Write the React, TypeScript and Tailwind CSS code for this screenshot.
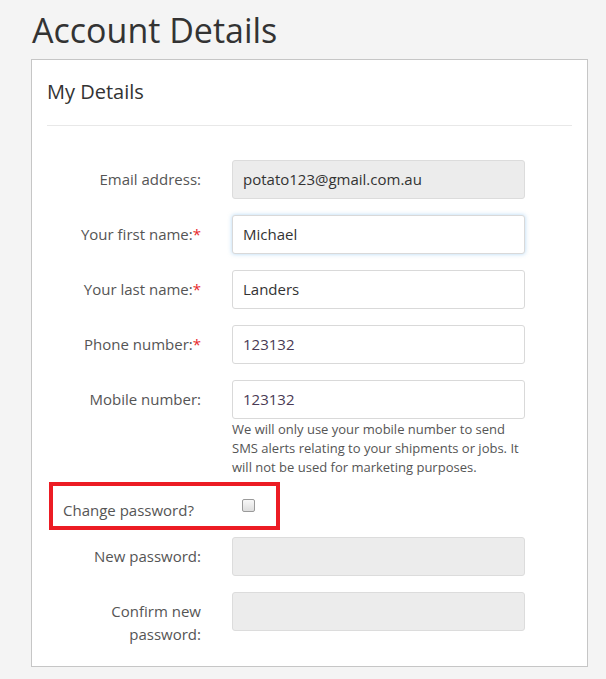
import React from 'react';

const font = { fontFamily: '"Open Sans", "Liberation Sans", sans-serif' };

type RowProps = {
  label: React.ReactNode;
  value?: string;
  disabled?: boolean;
  focused?: boolean;
  purple?: boolean;
};

const Row: React.FC<RowProps> = ({ label, value, disabled, focused, purple }) => (
  <div className="flex items-start">
    <div className="w-[154px] h-[39px] flex items-center justify-end text-right text-[15px] text-[#555]">
      {label}
    </div>
    <div
      className={`ml-[31px] w-[293px] h-[39px] rounded-[3px] border flex items-center px-[10px] text-[15px] ${
        disabled ? 'bg-[#ececec] border-[#dcdcdc]' : 'bg-white border-[#d9d9d9]'
      } ${focused ? 'border-[#66afe9] shadow-[0_0_4px_rgba(102,175,233,0.5)]' : ''} ${
        purple ? 'text-[#4a3a55]' : 'text-[#333]'
      }`}
    >
      {value}
    </div>
  </div>
);

const Req = () => <span className="text-[#e8282d]">*</span>;

export default function App() {
  return (
    <div className="min-h-screen bg-[#f4f4f4] pl-[31px] pr-[18px] pt-[8px] pb-[14px]" style={font}>
      <h1 className="text-[34px] leading-[44px] text-[#333] ml-[1px]">Account Details</h1>
      <div className="mt-[7px] bg-white border border-[#c6c6c6] w-[557px] px-[15px] pb-[20px]">
        <h2 className="text-[20px] leading-[28px] text-[#333] pt-[18px] pb-[19px]">My Details</h2>
        <div className="border-t border-[#e8e8e8] w-[525px]" />
        <div className="mt-[34px] flex flex-col gap-[16px]">
          <Row label="Email address:" value="potato123@gmail.com.au" disabled />
          <Row label={<span>Your first name:<Req /></span>} value="Michael" focused />
          <Row label={<span>Your last name:<Req /></span>} value="Landers" />
          <Row label={<span>Phone number:<Req /></span>} value="123132" purple />
          <div>
            <Row label="Mobile number:" value="123132" purple />
            <p className="ml-[185px] w-[300px] mt-[1px] text-[13px] leading-[19px] text-[#555]">
              We will only use your mobile number to send SMS alerts relating to your shipments or jobs. It will not be used for marketing purposes.
            </p>
          </div>
        </div>
        <div className="mt-[5px] ml-[2px] w-[231px] h-[48px] border-[4px] border-[#ec1c24] flex items-center">
          <span className="ml-[10px] mt-[8px] text-[15px] text-[#555]">Change password?</span>
          <span className="ml-auto mr-[21px] -mt-[2px] w-[13px] h-[13px] rounded-[2px] border border-[#9a9a9a] bg-gradient-to-b from-[#f8f8f8] to-[#dedede]" />
        </div>
        <div className="mt-[7px] flex flex-col gap-[16px]">
          <Row label="New password:" disabled />
          <div className="flex items-start">
            <div className="w-[154px] text-right text-[15px] leading-[23px] text-[#555] pt-[8px]">
              Confirm new
              <br />
              password:
            </div>
            <div className="ml-[31px] w-[293px] h-[39px] rounded-[3px] border bg-[#ececec] border-[#dcdcdc]" />
          </div>
        </div>
      </div>
    </div>
  );
}
